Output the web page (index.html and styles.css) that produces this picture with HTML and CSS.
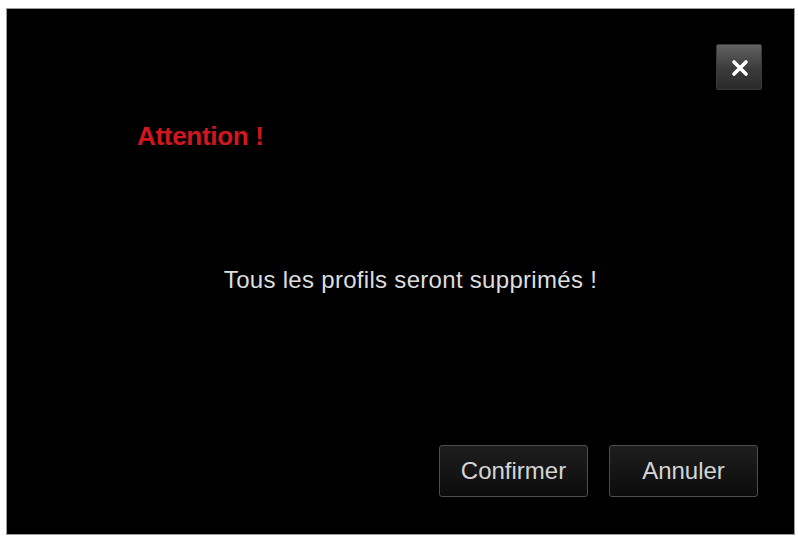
FILE: index.html
```html
<!DOCTYPE html>
<html lang="fr">
<head>
<meta charset="utf-8">
<title>Attention</title>
<link rel="stylesheet" href="styles.css">
</head>
<body>
<div class="dialog">
  <div class="top">
    <button class="close" aria-label="Fermer">
      <svg width="18" height="18" viewBox="0 0 18 18"><path d="M3 3 L15 15 M15 3 L3 15" stroke="#fff" stroke-width="3.6" stroke-linecap="round"/></svg>
    </button>
  </div>
  <h1 class="title">Attention !</h1>
  <p class="message">Tous les profils seront supprimés !</p>
  <div class="actions">
    <button class="btn">Confirmer</button>
    <button class="btn">Annuler</button>
  </div>
</div>
</body>
</html>
```
FILE: styles.css
```css
html, body {
  margin: 0;
  padding: 0;
  background: #ffffff;
}
body {
  width: 798px;
  height: 537px;
  overflow: hidden;
  font-family: "Liberation Sans", Arial, sans-serif;
}
.dialog {
  box-sizing: content-box;
  margin: 8px 3px 0 6px;
  width: 787px;
  height: 525px;
  border: 1px solid #9c9c9c;
  background: #000;
  display: flex;
  flex-direction: column;
}
.top {
  display: flex;
  justify-content: flex-end;
  padding: 35px 32px 0 0;
}
.close {
  width: 46px;
  height: 46px;
  padding: 0;
  border: 1px solid #3a3a3a;
  border-radius: 2px;
  background: linear-gradient(#626262, #3a3a3a 55%, #2a2a2a);
  display: flex;
  align-items: center;
  justify-content: center;
}
.close svg { display: block; margin: 2px 0 0 2px; }
.title {
  margin: 31px 0 0 130px;
  font-size: 26px;
  line-height: 30px;
  font-weight: bold;
  color: #d3161e;
  letter-spacing: -0.3px;
}
.message {
  margin: 115px 0 0 0;
  padding-left: 20px;
  text-align: center;
  font-size: 24px;
  line-height: 28px;
  color: #dedede;
  letter-spacing: 0.3px;
}
.actions {
  margin-top: auto;
  display: flex;
  justify-content: flex-end;
  gap: 21px;
  padding: 0 36px 37px 0;
}
.btn {
  width: 149px;
  height: 52px;
  border: 1px solid #4e4e4e;
  border-radius: 3px;
  background: linear-gradient(#1e1e1e, #0c0c0c);
  color: #d4d4d4;
  font-family: "Liberation Sans", Arial, sans-serif;
  font-size: 24px;
  padding: 0;
}
```
